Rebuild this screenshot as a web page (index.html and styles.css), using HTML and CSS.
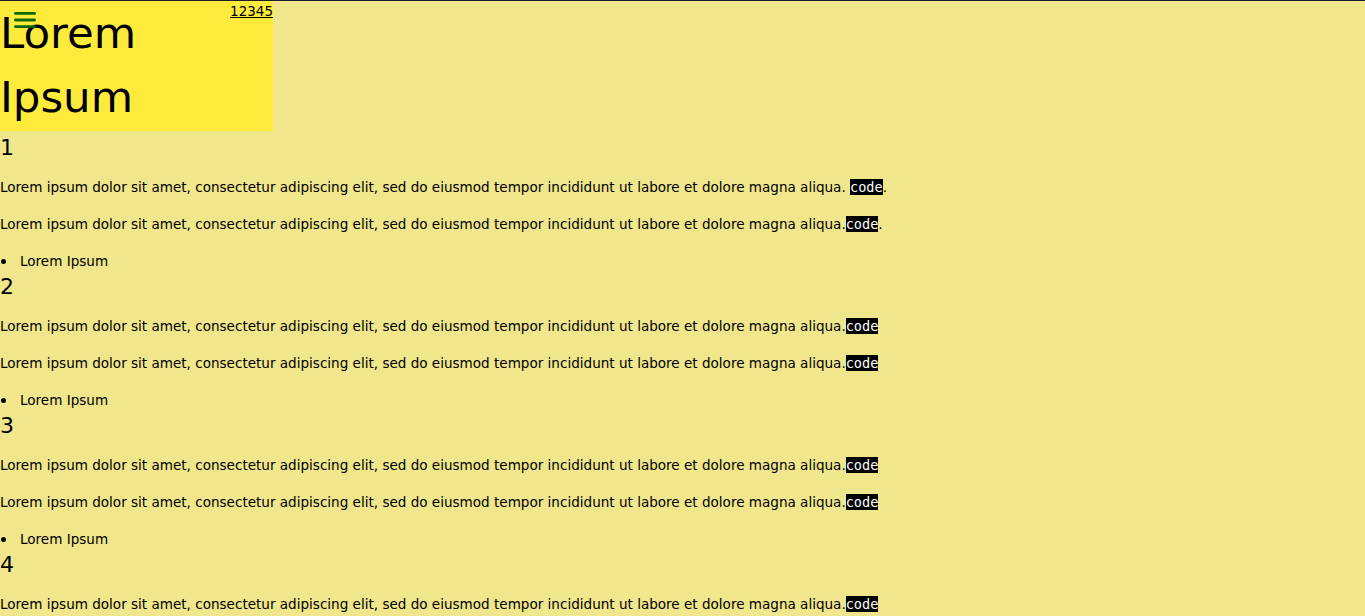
FILE: index.html
```html
<!DOCTYPE html>
<html lang="en">
<head>
<meta charset="utf-8">
<title>Lorem Ipsum</title>
<link rel="stylesheet" href="styles.css">
</head>
<body>
<header class="masthead">
  <button class="menu-btn" aria-label="Menu">
    <svg width="22" height="16" viewBox="0 0 22 16"><rect x="0" y="0" width="22" height="2.8" rx="1.4"/><rect x="0" y="6.6" width="22" height="2.8" rx="1.4"/><rect x="0" y="13.2" width="22" height="2.8" rx="1.4"/></svg>
  </button>
  <a class="num-link" href="#">12345</a>
  <h1 class="title">Lorem Ipsum</h1>
</header>
<main class="content">
  <section class="block">
    <h2 class="num">1</h2>
    <p>Lorem ipsum dolor sit amet, consectetur adipiscing elit, sed do eiusmod tempor incididunt ut labore et dolore magna aliqua. <code>code</code>.</p>
    <p>Lorem ipsum dolor sit amet, consectetur adipiscing elit, sed do eiusmod tempor incididunt ut labore et dolore magna aliqua.<code>code</code>.</p>
    <ul><li>Lorem Ipsum</li></ul>
  </section>
  <section class="block">
    <h2 class="num">2</h2>
    <p>Lorem ipsum dolor sit amet, consectetur adipiscing elit, sed do eiusmod tempor incididunt ut labore et dolore magna aliqua.<code>code</code></p>
    <p>Lorem ipsum dolor sit amet, consectetur adipiscing elit, sed do eiusmod tempor incididunt ut labore et dolore magna aliqua.<code>code</code></p>
    <ul><li>Lorem Ipsum</li></ul>
  </section>
  <section class="block">
    <h2 class="num">3</h2>
    <p>Lorem ipsum dolor sit amet, consectetur adipiscing elit, sed do eiusmod tempor incididunt ut labore et dolore magna aliqua.<code>code</code></p>
    <p>Lorem ipsum dolor sit amet, consectetur adipiscing elit, sed do eiusmod tempor incididunt ut labore et dolore magna aliqua.<code>code</code></p>
    <ul><li>Lorem Ipsum</li></ul>
  </section>
  <section class="block">
    <h2 class="num">4</h2>
    <p>Lorem ipsum dolor sit amet, consectetur adipiscing elit, sed do eiusmod tempor incididunt ut labore et dolore magna aliqua.<code>code</code></p>
    <p>Lorem ipsum dolor sit amet, consectetur adipiscing elit, sed do eiusmod tempor incididunt ut labore et dolore magna aliqua.<code>code</code></p>
    <ul><li>Lorem Ipsum</li></ul>
  </section>
</main>
</body>
</html>
```
FILE: styles.css
```css
html, body {
  margin: 0;
  padding: 0;
}
body {
  background: #f0e68c;
  border-top: 1px solid #1c1c2c;
  font-family: "DejaVu Sans", Verdana, sans-serif;
  font-size: 13.55px;
  color: #000;
}
.masthead {
  position: relative;
  width: 273px;
  height: 130px;
  background: #ffeb3b;
}
.menu-btn {
  position: absolute;
  left: 14px;
  top: 11px;
  padding: 0;
  border: 0;
  background: none;
  line-height: 0;
}
.menu-btn svg {
  fill: #0b6b0b;
}
.num-link {
  position: absolute;
  right: 0;
  top: 2px;
  color: #000;
  font-size: 13.5px;
  text-decoration: underline;
}
.title {
  margin: 0;
  font-size: 43.5px;
  font-weight: normal;
  line-height: 64px;
  width: 200px;
}
.num {
  margin: 0;
  font-size: 22px;
  font-weight: normal;
  line-height: 34px;
}
p {
  margin: 13px 0 19px;
  line-height: 18px;
}
code {
  font-family: "DejaVu Sans Mono", monospace;
  font-size: 13.55px;
  background: #000;
  color: #fff;
}
ul {
  margin: 0;
  padding: 0;
  list-style: none;
}
li {
  display: flex;
  align-items: center;
  line-height: 18px;
}
li::before {
  content: "";
  width: 5px;
  height: 5px;
  margin: 1px 14px 0 1px;
  border-radius: 50%;
  background: #000;
  flex: none;
}
```
